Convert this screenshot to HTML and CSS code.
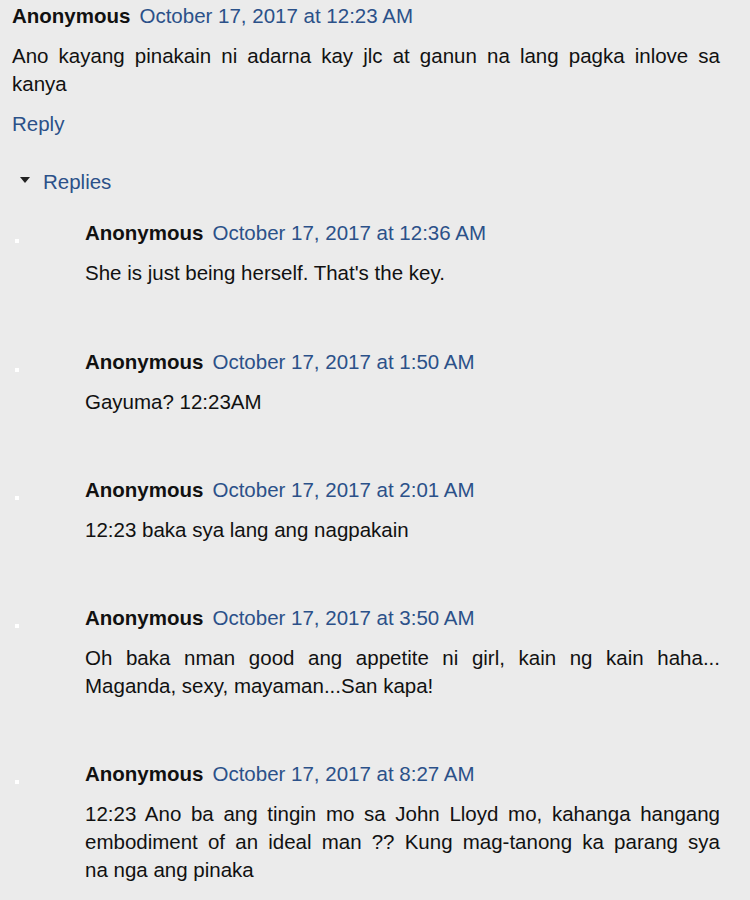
FILE: index.html
```html
<html>
    <head>
        <link rel="stylesheet" href="styles.css">
    </head>
    <body>
        <div class="comments">
            <div class="comment">
                <div class="header">
                    <span class="user">Anonymous</span>
                    <a class="date" href="#">October 17, 2017 at 12:23 AM</a>
                </div>
                <p class="content">Ano kayang pinakain ni adarna kay jlc at ganun na lang pagka inlove sa kanya</p>
                <a class="reply" href="#">Reply</a>
            </div>

            <div class="thread">
                <div class="toggle">
                    <span class="arrow"></span>
                    <a href="#">Replies</a>
                </div>
                <ul class="replies">
                    <li>
                        <div class="header">
                            <span class="user">Anonymous</span>
                            <a class="date" href="#">October 17, 2017 at 12:36 AM</a>
                        </div>
                        <p class="content">She is just being herself. That's the key.</p>
                    </li>
                    <li>
                        <div class="header">
                            <span class="user">Anonymous</span>
                            <a class="date" href="#">October 17, 2017 at 1:50 AM</a>
                        </div>
                        <p class="content">Gayuma? 12:23AM</p>
                    </li>
                    <li>
                        <div class="header">
                            <span class="user">Anonymous</span>
                            <a class="date" href="#">October 17, 2017 at 2:01 AM</a>
                        </div>
                        <p class="content">12:23 baka sya lang ang nagpakain</p>
                    </li>
                    <li>
                        <div class="header">
                            <span class="user">Anonymous</span>
                            <a class="date" href="#">October 17, 2017 at 3:50 AM</a>
                        </div>
                        <p class="content">Oh baka nman good ang appetite ni girl, kain ng kain haha... Maganda, sexy, mayaman...San kapa!</p>
                    </li>
                    <li>
                        <div class="header">
                            <span class="user">Anonymous</span>
                            <a class="date" href="#">October 17, 2017 at 8:27 AM</a>
                        </div>
                        <p class="content">12:23 Ano ba ang tingin mo sa John Lloyd mo, kahanga hangang embodiment of an ideal man ?? Kung mag-tanong ka parang sya na&nbsp;nga ang pinaka</p>
                    </li>
                </ul>
            </div>
        </div>
    </body>
</html>
```

FILE: styles.css
```css
* {
    margin: 0;
    padding: 0;
}

html,body {
    height: 100%;
}

body {
    background: #ebebeb;
    font-family: "Liberation Sans", Arial, sans-serif;
    font-size: 20.5px;
    line-height: 28px;
    color: #111;
}

a {
    color: #2b5189;
    text-decoration: none;
}

.comments {
    padding: 2px 30px 0 12px;
}

.header {
    display: flex;
    gap: 9px;
}

.user {
    font-weight: bold;
}

.content {
    margin-top: 12px;
    text-align: justify;
}

.reply {
    display: inline-block;
    margin-top: 12px;
}

.toggle {
    display: flex;
    align-items: center;
    margin-top: 30px;
    padding-left: 8px;
}

.arrow {
    width: 0;
    height: 0;
    border-left: 5px solid transparent;
    border-right: 5px solid transparent;
    border-top: 6px solid #222;
    margin-right: 13px;
    margin-top: -4px;
}

.replies {
    list-style: none;
    margin-top: 23px;
}

.replies li {
    position: relative;
    padding-left: 73px;
    margin-bottom: 60px;
}

.replies li:first-child {
    margin-bottom: 61px;
}

.replies li::before {
    content: "";
    position: absolute;
    left: 3px;
    top: 20px;
    width: 4px;
    height: 4px;
    background: #fff;
}
```
